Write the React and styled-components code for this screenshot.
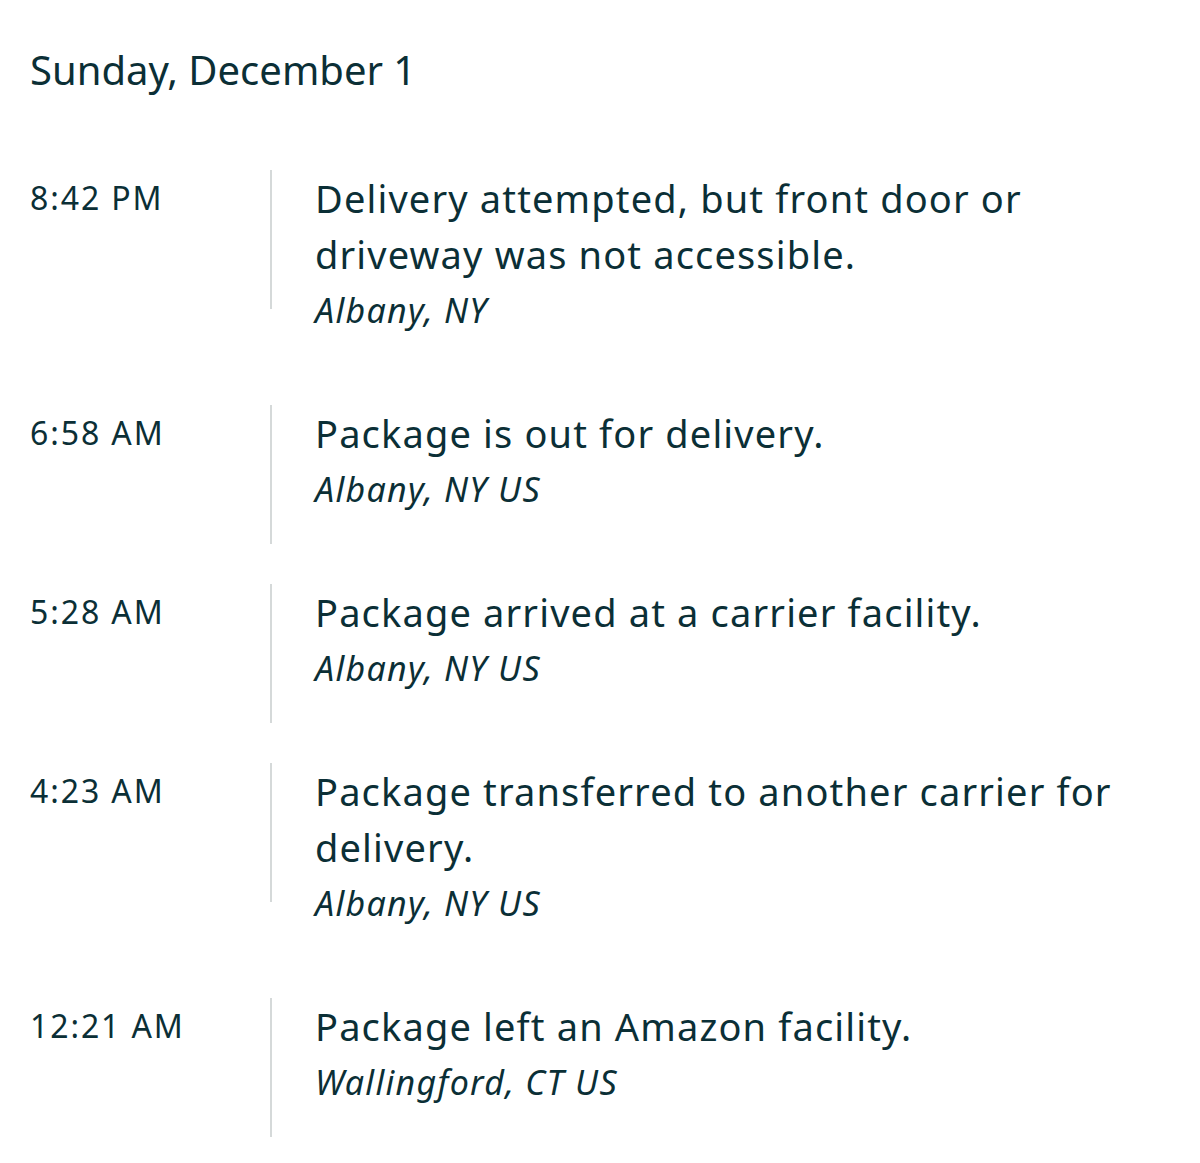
import React from 'react';
import styled, { createGlobalStyle } from 'styled-components';

const GlobalStyle = createGlobalStyle`
  html, body {
    margin: 0;
    padding: 0;
    background: #ffffff;
  }
  body {
    font-family: "Noto Sans", "Open Sans", Arial, sans-serif;
    color: #0b2f36;
  }
`;

const Page = styled.div`
  width: 1200px;
  padding: 42px 0 0 30px;
  box-sizing: border-box;
`;

const DayTitle = styled.h2`
  margin: 0 0 72px;
  font-size: 40px;
  line-height: 56px;
  font-weight: 400;
`;

const Timeline = styled.div`
  display: flex;
  flex-direction: column;
`;

const Event = styled.div`
  display: grid;
  grid-template-columns: 240px 2px 1fr;
  align-items: start;
  margin-bottom: 40px;
`;

const Time = styled.div`
  font-size: 32px;
  line-height: 56px;
  letter-spacing: 1.9px;
`;

const Divider = styled.div`
  width: 2px;
  height: 139px;
  background: #d5d9d9;
`;

const Details = styled.div`
  padding: 0 40px 27px 43px;
`;

const Status = styled.div`
  font-size: 38px;
  line-height: 56px;
  letter-spacing: 1.15px;
  white-space: nowrap;
`;

const Place = styled.div`
  font-size: 34px;
  line-height: 56px;
  font-style: italic;
  letter-spacing: 1.3px;
`;

const events = [
  { time: '8:42 PM', status: ['Delivery attempted, but front door or', 'driveway was not accessible.'], place: 'Albany, NY' },
  { time: '6:58 AM', status: ['Package is out for delivery.'], place: 'Albany, NY US' },
  { time: '5:28 AM', status: ['Package arrived at a carrier facility.'], place: 'Albany, NY US' },
  { time: '4:23 AM', status: ['Package transferred to another carrier for', 'delivery.'], place: 'Albany, NY US' },
  { time: '12:21 AM', status: ['Package left an Amazon facility.'], place: 'Wallingford, CT US' },
];

export default function App() {
  return (
    <Page>
      <GlobalStyle />
      <DayTitle>Sunday, December 1</DayTitle>
      <Timeline>
        {events.map(ev => (
          <Event key={ev.time}>
            <Time>{ev.time}</Time>
            <Divider />
            <Details>
              {ev.status.map(line => (
                <Status key={line}>{line}</Status>
              ))}
              <Place>{ev.place}</Place>
            </Details>
          </Event>
        ))}
      </Timeline>
    </Page>
  );
}
